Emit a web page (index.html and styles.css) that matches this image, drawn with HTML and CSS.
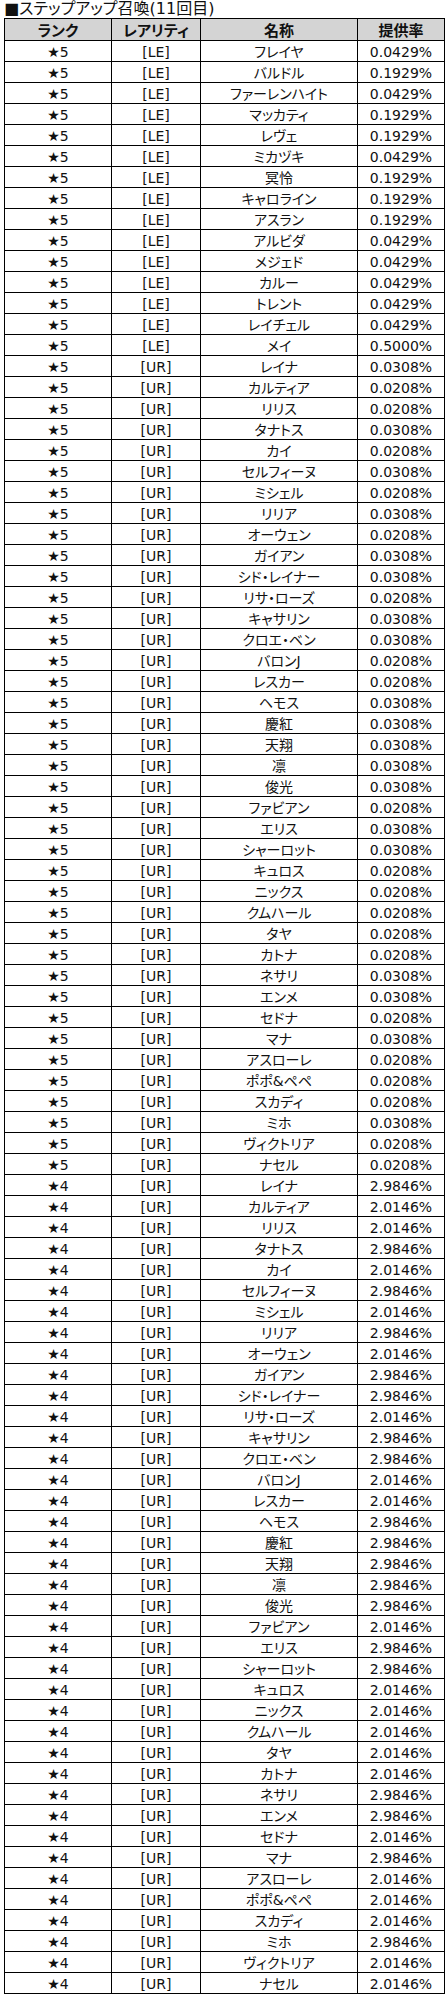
FILE: index.html
```html
<!DOCTYPE html>
<html lang="ja">
<head>
<meta charset="utf-8">
<title>ステップアップ召喚(11回目)</title>
<link rel="stylesheet" href="styles.css">
</head>
<body>
<div class="title">■ステップアップ召喚(11回目)</div>
<table class="rates">
<colgroup><col class="c-rank"><col class="c-rarity"><col class="c-name"><col class="c-rate"></colgroup>
<thead>
<tr><th>ランク</th><th>レアリティ</th><th>名称</th><th>提供率</th></tr>
</thead>
<tbody>
<tr><td>★5</td><td>[LE]</td><td>フレイヤ</td><td>0.0429%</td></tr>
<tr><td>★5</td><td>[LE]</td><td>バルドル</td><td>0.1929%</td></tr>
<tr><td>★5</td><td>[LE]</td><td>ファーレンハイト</td><td>0.0429%</td></tr>
<tr><td>★5</td><td>[LE]</td><td>マッカティ</td><td>0.1929%</td></tr>
<tr><td>★5</td><td>[LE]</td><td>レヴェ</td><td>0.1929%</td></tr>
<tr><td>★5</td><td>[LE]</td><td>ミカヅキ</td><td>0.0429%</td></tr>
<tr><td>★5</td><td>[LE]</td><td>冥怜</td><td>0.1929%</td></tr>
<tr><td>★5</td><td>[LE]</td><td>キャロライン</td><td>0.1929%</td></tr>
<tr><td>★5</td><td>[LE]</td><td>アスラン</td><td>0.1929%</td></tr>
<tr><td>★5</td><td>[LE]</td><td>アルビダ</td><td>0.0429%</td></tr>
<tr><td>★5</td><td>[LE]</td><td>メジェド</td><td>0.0429%</td></tr>
<tr><td>★5</td><td>[LE]</td><td>カルー</td><td>0.0429%</td></tr>
<tr><td>★5</td><td>[LE]</td><td>トレント</td><td>0.0429%</td></tr>
<tr><td>★5</td><td>[LE]</td><td>レイチェル</td><td>0.0429%</td></tr>
<tr><td>★5</td><td>[LE]</td><td>メイ</td><td>0.5000%</td></tr>
<tr><td>★5</td><td>[UR]</td><td>レイナ</td><td>0.0308%</td></tr>
<tr><td>★5</td><td>[UR]</td><td>カルティア</td><td>0.0208%</td></tr>
<tr><td>★5</td><td>[UR]</td><td>リリス</td><td>0.0208%</td></tr>
<tr><td>★5</td><td>[UR]</td><td>タナトス</td><td>0.0308%</td></tr>
<tr><td>★5</td><td>[UR]</td><td>カイ</td><td>0.0208%</td></tr>
<tr><td>★5</td><td>[UR]</td><td>セルフィーヌ</td><td>0.0308%</td></tr>
<tr><td>★5</td><td>[UR]</td><td>ミシェル</td><td>0.0208%</td></tr>
<tr><td>★5</td><td>[UR]</td><td>リリア</td><td>0.0308%</td></tr>
<tr><td>★5</td><td>[UR]</td><td>オーウェン</td><td>0.0208%</td></tr>
<tr><td>★5</td><td>[UR]</td><td>ガイアン</td><td>0.0308%</td></tr>
<tr><td>★5</td><td>[UR]</td><td>シド・レイナー</td><td>0.0308%</td></tr>
<tr><td>★5</td><td>[UR]</td><td>リサ・ローズ</td><td>0.0208%</td></tr>
<tr><td>★5</td><td>[UR]</td><td>キャサリン</td><td>0.0308%</td></tr>
<tr><td>★5</td><td>[UR]</td><td>クロエ・ベン</td><td>0.0308%</td></tr>
<tr><td>★5</td><td>[UR]</td><td>バロンJ</td><td>0.0208%</td></tr>
<tr><td>★5</td><td>[UR]</td><td>レスカー</td><td>0.0208%</td></tr>
<tr><td>★5</td><td>[UR]</td><td>ヘモス</td><td>0.0308%</td></tr>
<tr><td>★5</td><td>[UR]</td><td>慶紅</td><td>0.0308%</td></tr>
<tr><td>★5</td><td>[UR]</td><td>天翔</td><td>0.0308%</td></tr>
<tr><td>★5</td><td>[UR]</td><td>凛</td><td>0.0308%</td></tr>
<tr><td>★5</td><td>[UR]</td><td>俊光</td><td>0.0308%</td></tr>
<tr><td>★5</td><td>[UR]</td><td>ファビアン</td><td>0.0208%</td></tr>
<tr><td>★5</td><td>[UR]</td><td>エリス</td><td>0.0308%</td></tr>
<tr><td>★5</td><td>[UR]</td><td>シャーロット</td><td>0.0308%</td></tr>
<tr><td>★5</td><td>[UR]</td><td>キュロス</td><td>0.0208%</td></tr>
<tr><td>★5</td><td>[UR]</td><td>ニックス</td><td>0.0208%</td></tr>
<tr><td>★5</td><td>[UR]</td><td>クムハール</td><td>0.0208%</td></tr>
<tr><td>★5</td><td>[UR]</td><td>タヤ</td><td>0.0208%</td></tr>
<tr><td>★5</td><td>[UR]</td><td>カトナ</td><td>0.0208%</td></tr>
<tr><td>★5</td><td>[UR]</td><td>ネサリ</td><td>0.0308%</td></tr>
<tr><td>★5</td><td>[UR]</td><td>エンメ</td><td>0.0308%</td></tr>
<tr><td>★5</td><td>[UR]</td><td>セドナ</td><td>0.0208%</td></tr>
<tr><td>★5</td><td>[UR]</td><td>マナ</td><td>0.0308%</td></tr>
<tr><td>★5</td><td>[UR]</td><td>アスローレ</td><td>0.0208%</td></tr>
<tr><td>★5</td><td>[UR]</td><td>ポポ&amp;ペペ</td><td>0.0208%</td></tr>
<tr><td>★5</td><td>[UR]</td><td>スカディ</td><td>0.0208%</td></tr>
<tr><td>★5</td><td>[UR]</td><td>ミホ</td><td>0.0308%</td></tr>
<tr><td>★5</td><td>[UR]</td><td>ヴィクトリア</td><td>0.0208%</td></tr>
<tr><td>★5</td><td>[UR]</td><td>ナセル</td><td>0.0208%</td></tr>
<tr><td>★4</td><td>[UR]</td><td>レイナ</td><td>2.9846%</td></tr>
<tr><td>★4</td><td>[UR]</td><td>カルティア</td><td>2.0146%</td></tr>
<tr><td>★4</td><td>[UR]</td><td>リリス</td><td>2.0146%</td></tr>
<tr><td>★4</td><td>[UR]</td><td>タナトス</td><td>2.9846%</td></tr>
<tr><td>★4</td><td>[UR]</td><td>カイ</td><td>2.0146%</td></tr>
<tr><td>★4</td><td>[UR]</td><td>セルフィーヌ</td><td>2.9846%</td></tr>
<tr><td>★4</td><td>[UR]</td><td>ミシェル</td><td>2.0146%</td></tr>
<tr><td>★4</td><td>[UR]</td><td>リリア</td><td>2.9846%</td></tr>
<tr><td>★4</td><td>[UR]</td><td>オーウェン</td><td>2.0146%</td></tr>
<tr><td>★4</td><td>[UR]</td><td>ガイアン</td><td>2.9846%</td></tr>
<tr><td>★4</td><td>[UR]</td><td>シド・レイナー</td><td>2.9846%</td></tr>
<tr><td>★4</td><td>[UR]</td><td>リサ・ローズ</td><td>2.0146%</td></tr>
<tr><td>★4</td><td>[UR]</td><td>キャサリン</td><td>2.9846%</td></tr>
<tr><td>★4</td><td>[UR]</td><td>クロエ・ベン</td><td>2.9846%</td></tr>
<tr><td>★4</td><td>[UR]</td><td>バロンJ</td><td>2.0146%</td></tr>
<tr><td>★4</td><td>[UR]</td><td>レスカー</td><td>2.0146%</td></tr>
<tr><td>★4</td><td>[UR]</td><td>ヘモス</td><td>2.9846%</td></tr>
<tr><td>★4</td><td>[UR]</td><td>慶紅</td><td>2.9846%</td></tr>
<tr><td>★4</td><td>[UR]</td><td>天翔</td><td>2.9846%</td></tr>
<tr><td>★4</td><td>[UR]</td><td>凛</td><td>2.9846%</td></tr>
<tr><td>★4</td><td>[UR]</td><td>俊光</td><td>2.9846%</td></tr>
<tr><td>★4</td><td>[UR]</td><td>ファビアン</td><td>2.0146%</td></tr>
<tr><td>★4</td><td>[UR]</td><td>エリス</td><td>2.9846%</td></tr>
<tr><td>★4</td><td>[UR]</td><td>シャーロット</td><td>2.9846%</td></tr>
<tr><td>★4</td><td>[UR]</td><td>キュロス</td><td>2.0146%</td></tr>
<tr><td>★4</td><td>[UR]</td><td>ニックス</td><td>2.0146%</td></tr>
<tr><td>★4</td><td>[UR]</td><td>クムハール</td><td>2.0146%</td></tr>
<tr><td>★4</td><td>[UR]</td><td>タヤ</td><td>2.0146%</td></tr>
<tr><td>★4</td><td>[UR]</td><td>カトナ</td><td>2.0146%</td></tr>
<tr><td>★4</td><td>[UR]</td><td>ネサリ</td><td>2.9846%</td></tr>
<tr><td>★4</td><td>[UR]</td><td>エンメ</td><td>2.9846%</td></tr>
<tr><td>★4</td><td>[UR]</td><td>セドナ</td><td>2.0146%</td></tr>
<tr><td>★4</td><td>[UR]</td><td>マナ</td><td>2.9846%</td></tr>
<tr><td>★4</td><td>[UR]</td><td>アスローレ</td><td>2.0146%</td></tr>
<tr><td>★4</td><td>[UR]</td><td>ポポ&amp;ペペ</td><td>2.0146%</td></tr>
<tr><td>★4</td><td>[UR]</td><td>スカディ</td><td>2.0146%</td></tr>
<tr><td>★4</td><td>[UR]</td><td>ミホ</td><td>2.9846%</td></tr>
<tr><td>★4</td><td>[UR]</td><td>ヴィクトリア</td><td>2.0146%</td></tr>
<tr><td>★4</td><td>[UR]</td><td>ナセル</td><td>2.0146%</td></tr>
</tbody>
</table>
</body>
</html>
```

FILE: styles.css
```css
html, body {
  margin: 0;
  padding: 0;
  background: #ffffff;
}

body {
  font-family: "DejaVu Sans", "Noto Sans CJK JP", sans-serif;
  color: #111111;
  font-feature-settings: "palt";
}

.title {
  height: 18px;
  line-height: 18px;
  padding-left: 4px;
  font-size: 16px;
  white-space: nowrap;
}

.rates {
  margin-left: 4px;
  border-collapse: separate;
  border-spacing: 1px;
  background: #000000;
  table-layout: fixed;
  width: 441px;
}

.c-rank { width: 106px; }
.c-rarity { width: 88px; }
.c-name { width: 156px; }
.c-rate { width: 86px; }

.rates th,
.rates td {
  padding: 0;
  text-align: center;
  white-space: nowrap;
  overflow: hidden;
  font-size: 14px;
}

.rates th {
  height: 21px;
  line-height: 21px;
  background: #d4d4d4;
  font-family: "Noto Sans CJK JP", sans-serif;
  font-weight: 700;
  font-size: 15px;
}

.rates td {
  height: 18px;
  padding-top: 2px;
  line-height: 18px;
  background: #ffffff;
}
```
